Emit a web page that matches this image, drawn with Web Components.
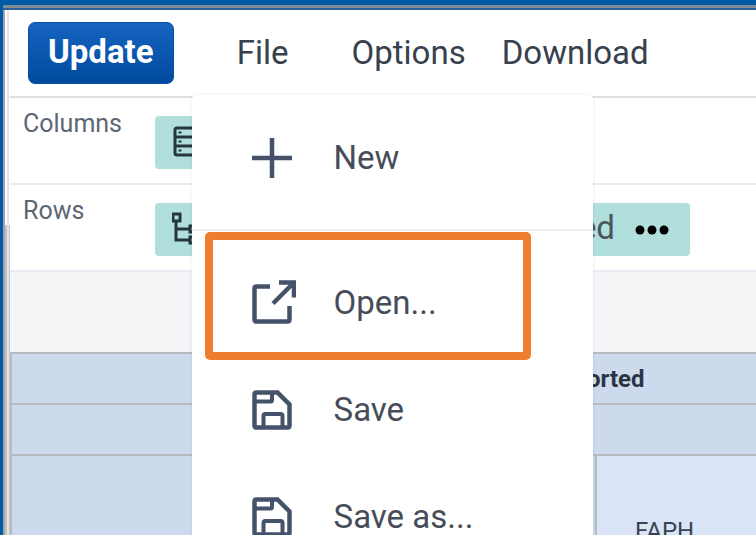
<!DOCTYPE html>
<html lang="en">
<head>
<meta charset="utf-8">
<title>Report editor</title>
<style>
html,body{margin:0;height:100%}
body{font-family:Roboto,"Liberation Sans",sans-serif;color:#3b434e;overflow:hidden;background:#005aa5}
</style>
</head>
<body>
<app-window>
  <tool-bar slot="bar">
    <update-button>Update</update-button>
    <menu-title class="file" open>File
      <drop-menu slot="menu">
        <menu-item icon="plus">New</menu-item>
        <menu-divider></menu-divider>
        <menu-item icon="open" marked>Open...</menu-item>
        <menu-item icon="save">Save</menu-item>
        <menu-item icon="save">Save as...</menu-item>
      </drop-menu>
    </menu-title>
    <menu-title>Options</menu-title>
    <menu-title>Download</menu-title>
  </tool-bar>
  <axis-row label="Columns"><field-chip kind="stack"></field-chip></axis-row>
  <axis-row label="Rows"><field-chip kind="tree" wide>ed</field-chip></axis-row>
  <pivot-table></pivot-table>
</app-window>
<script>
const define = (name, html, setup) => customElements.define(name, class extends HTMLElement {
  connectedCallback() {
    if (this.shadowRoot) return;
    this.attachShadow({mode: 'open'}).innerHTML = html;
    if (setup) setup(this, this.shadowRoot);
  }
});

const icons = {
  plus: '<path d="M24 4v40M4 24h40"/>',
  open: '<path d="M22 7.500H8.500Q6.500 7.500 6.500 9.500V40.500Q6.500 42.500 8.500 42.500H39.500Q41.500 42.500 41.500 40.500V27"/><path d="M25 24.500 45 4.500M31 3.500H46V18.500"/>',
  save: '<path d="M8.500 6.500H29.500L41.500 18.500V39.500Q41.500 41.500 39.500 41.500H8.500Q6.500 41.500 6.500 39.500V8.500Q6.500 6.500 8.500 6.500Z"/><path d="M7 15.500H22.500Q24 15.500 24 14V7M15.500 41V30Q15.500 28 17.500 28H32.500Q34.500 28 34.500 30V41" stroke-width="4"/>'
};
const chipIcons = {
  stack: '<rect x="3" y="3" width="32" height="27" rx="2"/><path d="M3 12H34M3 21H34"/><path d="M6.500 7.500h3M6.500 16.500h3M6.500 25.500h3" stroke-width="2"/>',
  tree: '<rect x="1" y="2" width="7" height="7"/><path d="M4 9V28H18M4 17H18"/><rect x="18" y="14" width="8" height="6"/><rect x="18" y="25" width="8" height="6"/>'
};

define('app-window', `<style>
:host{display:flex;flex-direction:column;box-sizing:border-box;height:100vh;padding:5px 0 0 3px;background:#005aa5}
.lip{flex:none;height:3px;background:#808b95;border-bottom:2px solid #2b6299}
.frame{flex:1;min-height:0;display:flex;background:#fff}
.edge{flex:none;width:7px;background:linear-gradient(#e3e3e3,#e3e3e3) 4px 0/2px 100% no-repeat,linear-gradient(#a2a5a8,#a2a5a8) 0 0/2px 100% no-repeat,linear-gradient(#fff 215px,#c4c4c4 215px)}
main{flex:1;min-width:0;overflow:hidden;display:flex;flex-direction:column;background:#f4f5f7}
</style><div class="lip"></div><div class="frame"><div class="edge"></div><main><slot name="bar"></slot><slot></slot></main></div>`);

define('tool-bar', `<style>
:host{display:flex;flex:none;height:88px;background:#fff;border-bottom:2px solid #e0e0e0;padding-left:18px;box-sizing:border-box;align-items:center}
</style><slot></slot>`);

define('update-button', `<style>
:host{display:block;flex:none;margin-right:18px}
button{display:block;font:700 33px/36px Roboto,sans-serif;color:#fff;height:62px;padding:0 19px 2px;margin:0;border:1px solid #0850a8;border-radius:7px;background:linear-gradient(#1664c0,#004a9e)}
</style><button><slot></slot></button>`);

define('menu-title', `<style>
:host{display:block;position:relative;flex:none}
:host(.file){min-width:142px}
button{display:block;font:400 33px/40px Roboto,sans-serif;color:#37414e;width:100%;height:86px;padding:0 18px;margin:0;border:0;background:none;white-space:nowrap}
</style><button aria-haspopup="menu"><slot></slot></button><slot name="menu"></slot>`);

define('drop-menu', `<style>
:host{display:block;position:absolute;left:0;top:85px;z-index:5;width:401px;padding:9px 0;box-sizing:border-box;background:#fff;border-radius:4px;box-shadow:0 0 3px rgba(40,50,70,.12)}
</style><slot></slot>`);

define('menu-divider', `<style>
:host{display:block;height:2px;margin:18px 0;background:#e9f0f6}
</style>`);

define('menu-item', `<style>
:host{display:block;position:relative}
button{display:flex;align-items:center;gap:38px;width:100%;height:107px;padding:0 0 0 56px;margin:0;border:0;background:none;font:400 33px/40px Roboto,sans-serif;color:#464d58;text-align:left}
svg{width:48px;height:48px;flex:none;fill:none;stroke:#44536a;stroke-width:4.5}
:host([marked])::after{content:"";position:absolute;left:13px;top:-17px;bottom:-4px;width:326px;box-sizing:border-box;border:8px solid #ee7d30;border-radius:5px;pointer-events:none}
</style><button><svg viewBox="0 0 48 48" aria-hidden="true"></svg><slot></slot></button>`,
(host, root) => { root.querySelector('svg').innerHTML = icons[host.getAttribute('icon')]; });

define('axis-row', `<style>
:host{display:flex;flex:none;box-sizing:border-box;height:87px;padding-left:13px;background:#fff;border-bottom:2px solid #e8ecf2}
.label{flex:none;width:132px;padding-top:12px;font-size:25px;line-height:28px;color:#5d6673}
.items{padding-top:18px}
</style><div class="label"></div><div class="items"><slot></slot></div>`,
(host, root) => { root.querySelector('.label').textContent = host.getAttribute('label'); });

define('field-chip', `<style>
:host{display:flex;align-items:center;box-sizing:border-box;height:53px;width:380px;padding:0 21px 0 17px;border-radius:4px;background:#b1dfdb;font-size:33px;line-height:40px;color:#4a555e}
:host([wide]){width:535px}
.lead{width:36px;height:36px;fill:none;stroke:#26363e;stroke-width:3}
.text{margin-left:auto;padding-bottom:4px}
button{display:flex;border:0;padding:0;margin:0 0 0 20px;background:none}
.dots{width:34px;height:10px;fill:#000}
</style><svg class="lead" viewBox="0 0 36 36" aria-hidden="true"></svg><span class="text"><slot></slot></span><button aria-label="More"><svg class="dots" viewBox="0 0 34 10"><circle cx="5" cy="5" r="4.500"/><circle cx="17" cy="5" r="4.500"/><circle cx="29" cy="5" r="4.500"/></svg></button>`,
(host, root) => { root.querySelector('.lead').innerHTML = chipIcons[host.getAttribute('kind')]; });

define('pivot-table', `<style>
:host{display:block;flex:none;padding-top:80px}
table{width:100%;border-collapse:collapse;table-layout:fixed;font-size:24px;line-height:28px;color:#3a4350}
th,td{border:2px solid #b8bcc0;background:#cddaed;padding:0;text-align:left;vertical-align:middle}
tr{height:51px}
th{font-weight:700;padding-left:177px;color:#2c3442}
tr.tall{height:152px}
.data{background:#d9e4f6;padding-left:38px}
.a{width:398px}.b{width:187px}
tr>*:last-child{border-right:0}
</style><table>
<colgroup><col class="a"><col class="b"><col></colgroup>
<tr><td></td><th colspan="2">orted</th></tr>
<tr><td></td><td colspan="2"></td></tr>
<tr class="tall"><td></td><td></td><td class="data">FAPH</td></tr>
</table>`);
</script>
</body>
</html>
